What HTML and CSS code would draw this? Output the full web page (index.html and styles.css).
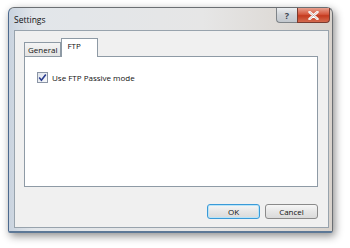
FILE: index.html
```html
<!DOCTYPE html>
<html>
<head>
<meta charset="utf-8">
<link rel="stylesheet" href="styles.css">
</head>
<body>
<div class="window">
  <div class="titlebar">
    <span class="title">Settings</span>
    <div class="caption-btns">
      <div class="cbtn help">?</div>
      <div class="cbtn close">
        <svg width="11" height="9" viewBox="0 0 11 9"><path d="M1.5 1 L9.5 8 M9.5 1 L1.5 8" stroke="#fff" stroke-width="2.4" stroke-linecap="round"/><path d="M1.5 1 L9.5 8 M9.5 1 L1.5 8" stroke="#5a2a24" stroke-width="0.6" opacity="0.5"/></svg>
      </div>
    </div>
  </div>
  <div class="client">
    <div class="tabs">
      <div class="tab">General</div>
      <div class="tab active">FTP</div>
    </div>
    <div class="panel">
      <label class="check">
        <span class="box">
          <svg width="9" height="9" viewBox="0 0 9 9"><path d="M1.2 4.6 L3.4 7.2 L7.8 1.4" fill="none" stroke="#2a3d8f" stroke-width="1.6"/></svg>
        </span>
        <span class="label">Use FTP Passive mode</span>
      </label>
    </div>
    <div class="buttons">
      <div class="btn default">OK</div>
      <div class="btn">Cancel</div>
    </div>
  </div>
</div>
</body>
</html>
```

FILE: styles.css
```css
html, body {
  margin: 0;
  padding: 0;
  background: #ffffff;
  width: 350px;
  height: 248px;
  overflow: hidden;
  font-family: "Open Sans", "Noto Sans", sans-serif;
}

.window {
  margin: 7px 0 0 8px;
  width: 325px;
  height: 226px;
  box-sizing: border-box;
  border: 1px solid #6b6f73;
  border-radius: 6px 6px 2px 2px;
  background: linear-gradient(to right, #c9d3df 0%, #e2e6ea 8%, #e6e6e6 60%, #d8d2cc 100%);
  box-shadow: 2px 3px 8px rgba(0,0,0,0.45);
  display: flex;
  flex-direction: column;
  padding: 0 3px 3px 5px;
  border-left-color: #4d6a8f;
  border-bottom: 2px solid #5d7896;
}

.titlebar {
  height: 22px;
  display: flex;
  align-items: flex-start;
}

.title {
  font-size: 8.5px;
  font-weight: 500;
  color: #111;
  margin-top: 6px;
}

.caption-btns {
  margin-left: auto;
  display: flex;
  margin-right: -1px;
}

.cbtn {
  height: 15px;
  box-sizing: border-box;
  border: 1px solid #7e8388;
  border-top: none;
  display: flex;
  align-items: center;
  justify-content: center;
}

.help {
  width: 21px;
  border-radius: 0 0 0 4px;
  background: linear-gradient(#eceef0, #cfd3d8 50%, #c3c8ce);
  color: #3c4550;
  font-size: 9px;
  font-weight: bold;
  border-right: none;
}

.close {
  width: 33px;
  border-radius: 0 0 4px 0;
  background: linear-gradient(#e8a08f, #d5583e 45%, #c43a1f 55%, #d46a4e);
  border-color: #7a3b2f;
}

.client {
  flex: 1;
  background: #f0f0f0;
  border: 1px solid #98a3ad;
  display: flex;
  flex-direction: column;
  padding: 7px 10px 0 9px;
}

.tabs {
  display: flex;
  align-items: flex-end;
  height: 18px;
  position: relative;
  z-index: 1;
}

.tab {
  font-size: 8px;
  font-weight: 500;
  color: #111;
  height: 14px;
  line-height: 13px;
  padding: 0 3px;
  border: 1px solid #8e9aa5;
  border-bottom: none;
  background: linear-gradient(#f4f4f4, #e3e3e3);
  box-sizing: border-box;
}

.tab.active {
  background: #ffffff;
  width: 37px;
  padding: 0 0 0 5px;
  margin-left: 0;
  margin-bottom: -1px;
  line-height: 14px;
  height: 19px;
}

.panel {
  height: 129px;
  background: #ffffff;
  border: 1px solid #8e9aa5;
}

.check {
  display: flex;
  align-items: center;
  margin: 15px 0 0 12px;
}

.box {
  width: 11px;
  height: 11px;
  box-sizing: border-box;
  border: 1px solid #8b95a5;
  background: linear-gradient(135deg, #dfe4ec, #f8f9fb);
  display: flex;
  align-items: center;
  justify-content: center;
}

.label {
  font-size: 8px;
  font-weight: 500;
  color: #111;
  margin-left: 4px;
}

.buttons {
  display: flex;
  justify-content: flex-end;
  gap: 5px;
  margin-top: 17px;
}

.btn {
  width: 53px;
  height: 15px;
  box-sizing: border-box;
  border: 1px solid #8a8a8a;
  border-radius: 3px;
  background: linear-gradient(#f6f6f6, #e6e6e6 50%, #dadada);
  font-size: 8px;
  font-weight: 500;
  color: #111;
  display: flex;
  align-items: center;
  justify-content: center;
}

.btn.default {
  border-color: #3a9ad8;
  box-shadow: inset 0 0 0 1px #b9e4f8;
}
```
